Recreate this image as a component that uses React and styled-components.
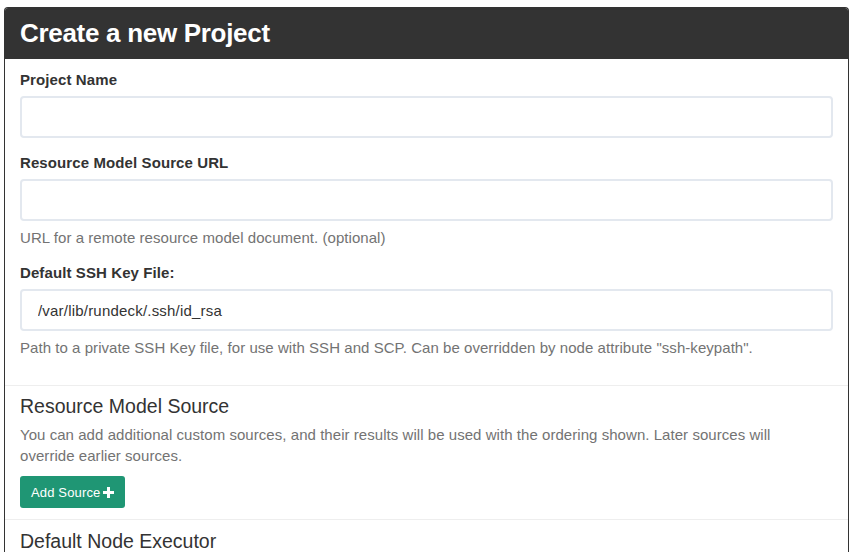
import React from "react";
import styled, {createGlobalStyle} from "styled-components";

const Global = createGlobalStyle`
  body {
    margin: 0;
    background: #fff;
    font-family: "Liberation Sans", Arial, Helvetica, sans-serif;
    color: #333;
  }
`

const Page = styled.div`
  padding: 7px 14px 0 4px;
`

const Panel = styled.div`
  border: 1px solid #333;
  border-bottom: none;
  border-radius: 4px 4px 0 0;
  background: #fff;
`

const Header = styled.div`
  background: #333;
  color: #fff;
  height: 51px;
  display: flex;
  align-items: center;
  padding: 0 15px;
  border-radius: 3px 3px 0 0;
  font-size: 26px;
  font-weight: bold;
  letter-spacing: -0.3px;
`

const Section = styled.div`
  padding: ${props => props.pad || "11px 15px 12px"};
  border-top: ${props => (props.divided ? "1px solid #eee" : "none")};
`

const Group = styled.div`
  margin-bottom: ${props => (props.last ? "0" : "15px")};
`

const Label = styled.label`
  display: block;
  font-size: 15px;
  font-weight: bold;
  letter-spacing: 0.1px;
  line-height: 20px;
  margin-bottom: 6px;
`

const Input = styled.input`
  display: block;
  box-sizing: border-box;
  width: 100%;
  height: 42px;
  padding: 0 16px;
  font-family: inherit;
  font-size: 15px;
  letter-spacing: 0.2px;
  color: #333;
  border: 2px solid #e3e8ef;
  border-radius: 4px;
  background: #fff;
  outline: none;
`

const Help = styled.div`
  margin-top: 7px;
  font-size: 15px;
  letter-spacing: 0.05px;
  line-height: 20px;
  color: #737373;
`

const Heading = styled.h3`
  margin: 0;
  font-size: 19.5px;
  font-weight: normal;
  line-height: 20px;
  color: #333;
`

const Text = styled.p`
  margin: 8px 0 10px;
  max-width: 790px;
  font-size: 15px;
  letter-spacing: 0.05px;
  line-height: 21px;
  color: #737373;
`

const Button = styled.button`
  display: inline-flex;
  align-items: center;
  gap: 3px;
  height: 32px;
  padding: 0 11px;
  font-family: inherit;
  font-size: 13px;
  letter-spacing: 0.15px;
  color: #fff;
  background: #1f9674;
  border: none;
  border-radius: 3px;
`

const Plus = () => (
    <svg width="11" height="11" viewBox="0 0 11 11">
        <path d="M4 0h3v4h4v3H7v4H4V7H0V4h4z" fill="#fff"/>
    </svg>
)

const App = () => {
    return (
        <Page>
            <Global/>
            <Panel>
                <Header>Create a new Project</Header>
                <Section pad="11px 15px 27px">
                    <Group>
                        <Label>Project Name</Label>
                        <Input/>
                    </Group>
                    <Group>
                        <Label>Resource Model Source URL</Label>
                        <Input/>
                        <Help>URL for a remote resource model document. (optional)</Help>
                    </Group>
                    <Group last>
                        <Label>Default SSH Key File:</Label>
                        <Input defaultValue="/var/lib/rundeck/.ssh/id_rsa"/>
                        <Help>Path to a private SSH Key file, for use with SSH and SCP. Can be overridden by node attribute "ssh-keypath".</Help>
                    </Group>
                </Section>
                <Section divided pad="10px 15px 11px">
                    <Heading>Resource Model Source</Heading>
                    <Text>You can add additional custom sources, and their results will be used with the ordering shown. Later sources will override earlier sources.</Text>
                    <Button>Add Source <Plus/></Button>
                </Section>
                <Section divided pad="11px 15px 20px">
                    <Heading>Default Node Executor</Heading>
                </Section>
            </Panel>
        </Page>
    )
}

export default App;
